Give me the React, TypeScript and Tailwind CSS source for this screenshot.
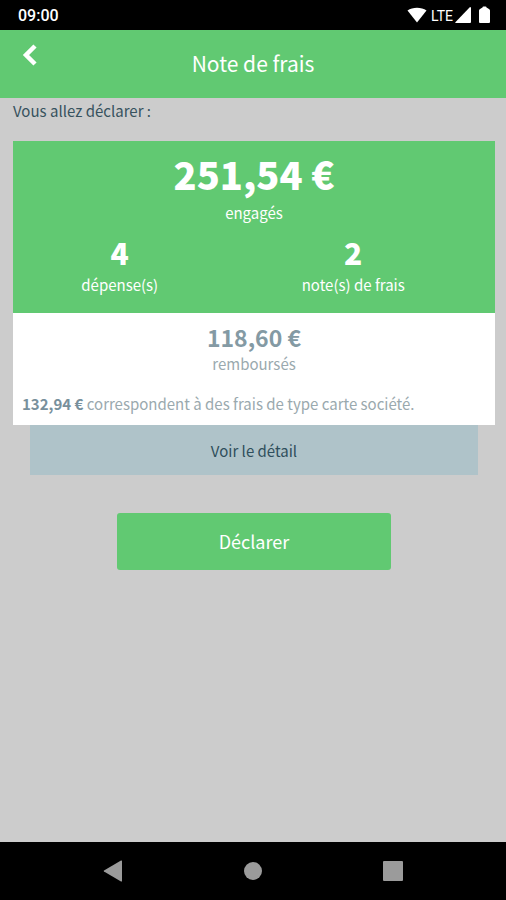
import type { ReactNode } from "react";

function StatusBar() {
  return (
    <div className="flex h-[30px] items-center justify-between bg-black pr-4 pl-[18px] text-white">
      <span className="pt-0.5 font-['Roboto',sans-serif] text-base leading-5 font-medium">09:00</span>
      <div className="flex items-center gap-1">
        <svg width="20" height="16" viewBox="0 0 20 16" fill="currentColor" aria-hidden="true">
          <path d="M.5 3.400C5.600 0 14.400 0 19.500 3.400L10 15.500Z" />
        </svg>
        <div className="flex items-center gap-0.5">
          <span className="pt-0.5 font-['Roboto',sans-serif] text-sm leading-5">LTE</span>
          <svg width="16" height="16" viewBox="0 0 16 16" fill="currentColor" aria-hidden="true">
            <path d="M15 0q1 0 1 1v14q0 1-1 1H1q-1.200 0-.4-1Z" />
          </svg>
        </div>
        <svg className="ml-1" width="11" height="18" viewBox="0 0 11 18" fill="currentColor" aria-hidden="true">
          <path d="M3.500 1.500Q3.500.500 4.500.500h2q1 0 1 1L10 3q1 .5 1 1.500V16q0 1-1 1H1q-1 0-1-1V4.500Q0 3.500 1 3Z" />
        </svg>
      </div>
    </div>
  );
}

function Header() {
  return (
    <header className="grid h-[68px] grid-cols-[48px_1fr_48px] bg-[#61c972] text-white">
      <button type="button" aria-label="Retour" className="flex items-start justify-center pt-[14px] pl-3">
        <svg width="16" height="22" viewBox="0 0 16 22" fill="none" stroke="currentColor" strokeWidth="4.500" aria-hidden="true">
          <path d="M13 2 4 11l9 9" />
        </svg>
      </button>
      <h1 className="pt-[17px] text-center text-[21px] leading-8">Note de frais</h1>
    </header>
  );
}

function Count({ value, children }: { value: string; children: ReactNode }) {
  return (
    <div className="flex flex-col items-center">
      <strong className="text-3xl leading-[44px] font-black">{value}</strong>
      <span className="text-[15px] leading-[22px]">{children}</span>
    </div>
  );
}

function Summary() {
  return (
    <section>
      <div className="bg-[#61c972] pt-[5px] pb-[17px] text-center text-white">
        <p className="text-[38px] leading-14 font-black">251,54 €</p>
        <p className="text-[15px] leading-[22px]">engagés</p>
        <div className="mt-1.5 grid grid-cols-2 gap-5 pr-[35px]">
          <Count value="4">dépense(s)</Count>
          <Count value="2">note(s) de frais</Count>
        </div>
      </div>
      <div className="bg-white pt-2 pb-2.5 text-[#9aa9ae]">
        <p className="text-center text-[23px] leading-8 font-bold text-[#849aa4]">118,60 €</p>
        <p className="text-center text-[15px] leading-[22px]">remboursés</p>
        <p className="mt-[18px] px-[9px] text-[15px] leading-[22px]">
          <strong className="font-bold text-[#78909c]">132,94 €</strong> correspondent à des frais de type carte société.
        </p>
      </div>
      <div className="px-[17px]">
        <button type="button" className="h-[50px] w-full bg-[#afc3c9] pt-0.5 text-[15px] leading-[22px] text-[#2f4f5c]">
          Voir le détail
        </button>
      </div>
    </section>
  );
}

function NavigationBar() {
  return (
    <nav className="grid h-[58px] grid-cols-3 place-items-center bg-black px-[43px] text-[#9b9b9b]">
      <button type="button" aria-label="Précédent">
        <svg width="20" height="22" viewBox="0 0 20 22" fill="currentColor" aria-hidden="true">
          <path d="M18 .6Q19 .1 19 1v20q0 .9-1 .4L1 11.500Q.2 11 1 10.500Z" />
        </svg>
      </button>
      <button type="button" aria-label="Accueil">
        <svg width="18" height="18" viewBox="0 0 18 18" fill="currentColor" aria-hidden="true">
          <circle cx="9" cy="9" r="9" />
        </svg>
      </button>
      <button type="button" aria-label="Applications récentes">
        <svg width="20" height="20" viewBox="0 0 20 20" fill="currentColor" aria-hidden="true">
          <rect width="20" height="20" rx="1" />
        </svg>
      </button>
    </nav>
  );
}

export default function App() {
  return (
    <div className="flex min-h-screen flex-col bg-[#cccccc] font-['Noto_Sans_CJK_JP',sans-serif]">
      <StatusBar />
      <Header />
      <main className="flex flex-1 flex-col pr-[11px] pl-[13px]">
        <p className="mt-0.5 mb-[19px] text-[15px] leading-[22px] text-[#37525e]">Vous allez déclarer :</p>
        <Summary />
        <button type="button" className="mt-[38px] h-[57px] w-[57%] self-center rounded-[3px] bg-[#61c972] pb-0.5 text-lg leading-8 text-white">
          Déclarer
        </button>
      </main>
      <NavigationBar />
    </div>
  );
}
